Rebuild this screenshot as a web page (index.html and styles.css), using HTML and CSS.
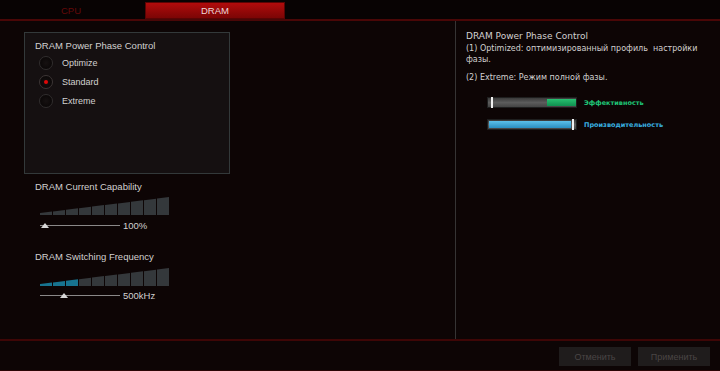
FILE: index.html
```html
<!DOCTYPE html>
<html lang="ru">
<head>
    <meta charset="UTF-8">
    <title>DRAM</title>
    <link rel="stylesheet" href="styles.css">
</head>
<body>
    <div class="tabs">
        <div class="tab">CPU</div>
        <div class="tab active">DRAM</div>
    </div>

    <div class="main">
        <div class="left">
            <div class="phase-box">
                <div class="box-title">DRAM Power Phase Control</div>
                <div class="radio-row"><span class="radio"></span>Optimize</div>
                <div class="radio-row"><span class="radio checked"></span>Standard</div>
                <div class="radio-row"><span class="radio"></span>Extreme</div>
            </div>

            <!-- current capability -->
            <div class="section">
                <div class="label">DRAM Current Capability</div>
                <svg class="stairs" width="130" height="18" viewBox="0 0 130 18">
                    <polygon points="0,16 12,14.5 12,18 0,18"/>
                    <polygon points="13,14.4 25,12.9 25,18 13,18"/>
                    <polygon points="26,12.8 38,11.3 38,18 26,18"/>
                    <polygon points="39,11.2 51,9.7 51,18 39,18"/>
                    <polygon points="52,9.6 64,8.1 64,18 52,18"/>
                    <polygon points="65,8 77,6.5 77,18 65,18"/>
                    <polygon points="78,6.4 90,4.9 90,18 78,18"/>
                    <polygon points="91,4.8 103,3.3 103,18 91,18"/>
                    <polygon points="104,3.2 116,1.7 116,18 104,18"/>
                    <polygon points="117,1.6 129,0.1 129,18 117,18"/>
                </svg>
                <div class="slider">
                    <div class="track">
                        <svg class="thumb" style="left: 1px" width="8" height="5" viewBox="0 0 8 5"><polygon points="4,0 8,5 0,5"/></svg>
                    </div>
                    <span class="value">100%</span>
                </div>
            </div>

            <!-- switching frequency -->
            <div class="section second">
                <div class="label">DRAM Switching Frequency</div>
                <svg class="stairs" width="130" height="18" viewBox="0 0 130 18">
                    <polygon class="on" points="0,16 12,14.5 12,18 0,18"/>
                    <polygon class="on" points="13,14.4 25,12.9 25,18 13,18"/>
                    <polygon class="on" points="26,12.8 38,11.3 38,18 26,18"/>
                    <polygon points="39,11.2 51,9.7 51,18 39,18"/>
                    <polygon points="52,9.6 64,8.1 64,18 52,18"/>
                    <polygon points="65,8 77,6.5 77,18 65,18"/>
                    <polygon points="78,6.4 90,4.9 90,18 78,18"/>
                    <polygon points="91,4.8 103,3.3 103,18 91,18"/>
                    <polygon points="104,3.2 116,1.7 116,18 104,18"/>
                    <polygon points="117,1.6 129,0.1 129,18 117,18"/>
                </svg>
                <div class="slider">
                    <div class="track">
                        <svg class="thumb" style="left: 20px" width="8" height="5" viewBox="0 0 8 5"><polygon points="4,0 8,5 0,5"/></svg>
                    </div>
                    <span class="value">500kHz</span>
                </div>
            </div>
        </div>

        <div class="right">
            <div class="help-title">DRAM Power Phase Control</div>
            <p class="help">(1) Optimized: оптимизированный профиль&nbsp; настройки фазы.</p>
            <p class="help last">(2) Extreme: Режим полной фазы.</p>

            <div class="meter-row">
                <div class="meter">
                    <div class="fill green" style="left: 59px; width: 29px"></div>
                    <div class="mark" style="left: 3px"></div>
                </div>
                <span class="meter-label green-text">Эффективность</span>
            </div>
            <div class="meter-row">
                <div class="meter">
                    <div class="fill blue" style="left: 1px; width: 82px"></div>
                    <div class="mark" style="left: 84px"></div>
                </div>
                <span class="meter-label blue-text">Производительность</span>
            </div>
        </div>
    </div>

    <div class="footer">
        <button class="btn">Отменить</button>
        <button class="btn">Применить</button>
    </div>
</body>
</html>
```

FILE: styles.css
```css
body {
    margin: 0;
    width: 720px;
    height: 371px;
    overflow: hidden;
    background: #0d0505;
    color: #d2d0d0;
    font-family: "Liberation Sans", Arial, sans-serif;
    font-size: 9.5px;
}

/* tab bar */
.tabs {
    display: flex;
    gap: 4px;
    height: 19px;
    padding-left: 1px;
    background: #080303;
    border-bottom: 2px solid #4a0707;
}
.tab {
    width: 140px;
    height: 17px;
    margin-top: 2px;
    line-height: 17px;
    text-align: center;
    color: #640909;
    font-size: 9.5px;
}
.tab.active {
    background: linear-gradient(#b40c0c, #780505);
    color: #eed8d8;
    box-shadow: inset 0 0 0 1px #5a0404;
}

.main {
    display: flex;
    height: 318px;
}
.left {
    width: 455px;
    padding: 11px 0 0 24px;
    box-sizing: border-box;
}
.right {
    flex: 1;
    border-left: 1px solid #363434;
    padding: 9px 10px 0 10px;
    font-family: "DejaVu Sans", Verdana, sans-serif;
    font-size: 8px;
}

/* power phase box */
.phase-box {
    width: 206px;
    height: 142px;
    box-sizing: border-box;
    border: 1px solid #33393a;
    background: #151011;
    padding: 7px 0 0 10px;
}
.box-title {
    line-height: 12px;
    margin-bottom: 1px;
}
.radio-row {
    display: flex;
    align-items: center;
    height: 19.4px;
    margin-left: 4px;
    font-size: 9px;
}
.radio {
    width: 14px;
    height: 14px;
    box-sizing: border-box;
    border-radius: 50%;
    border: 1px solid #302d2d;
    background: radial-gradient(#161111, #070404);
    margin-right: 9px;
    position: relative;
}
.radio.checked {
    border-color: #3c3535;
}
.radio.checked::after {
    content: "";
    position: absolute;
    left: 4px;
    top: 4px;
    width: 4px;
    height: 4px;
    border-radius: 50%;
    background: #e00808;
}

/* sliders */
.section {
    margin: 7px 0 0 11px;
}
.section.second {
    margin-top: 21px;
}
.label {
    line-height: 12px;
}
.stairs {
    display: block;
    margin: 4px 0 0 5px;
    fill: #34383b;
}
.second .stairs {
    margin-top: 5px;
}
.stairs .on {
    fill: #17738f;
}
.slider {
    display: flex;
    align-items: center;
    height: 10px;
    margin: 5px 0 0 5px;
}
.second .slider {
    margin-top: 4px;
}
.track {
    position: relative;
    width: 80px;
    height: 1px;
    background: #8a8888;
}
.thumb {
    position: absolute;
    top: -2px;
    fill: #d8d8d8;
}
.value {
    margin-left: 3px;
    font-size: 9.5px;
}

/* help text */
.help-title {
    line-height: 12px;
    font-size: 9px;
    margin-bottom: 1px;
}
.help {
    margin: 0 0 7px 0;
    line-height: 11px;
}
.help.last {
    margin-bottom: 14px;
}
.meter-row {
    display: flex;
    align-items: center;
    margin: 0 0 0 21px;
    height: 11px;
}
.meter-row + .meter-row {
    margin-top: 11px;
}
.meter {
    position: relative;
    width: 90px;
    height: 11px;
    box-sizing: border-box;
    background: linear-gradient(#3a3a3a, #5c5c5c 50%, #444);
    border: 1px solid #1e1e1e;
}
.fill {
    position: absolute;
    top: 1px;
    bottom: 1px;
}
.fill.green {
    background: linear-gradient(#28c070, #0f9050);
}
.fill.blue {
    background: linear-gradient(#5cc0ea, #2a8ec0);
}
.mark {
    position: absolute;
    top: -1px;
    bottom: -1px;
    width: 2px;
    background: #f0f0f0;
}
.meter-label {
    margin-left: 7px;
    font-size: 6.5px;
    font-weight: bold;
}
.green-text {
    color: #1fc577;
}
.blue-text {
    color: #38b0e0;
}

/* footer */
.footer {
    display: flex;
    justify-content: flex-end;
    gap: 7px;
    height: 23px;
    padding: 6px 10px 0 0;
    border-top: 2px solid #3e0606;
    border-bottom: 1px solid #2a0505;
}
.btn {
    width: 72px;
    height: 19px;
    border: none;
    background: #1f1c1c;
    color: #4a4545;
    font-family: "Liberation Sans", Arial, sans-serif;
    font-size: 9px;
    padding: 0;
}
```
